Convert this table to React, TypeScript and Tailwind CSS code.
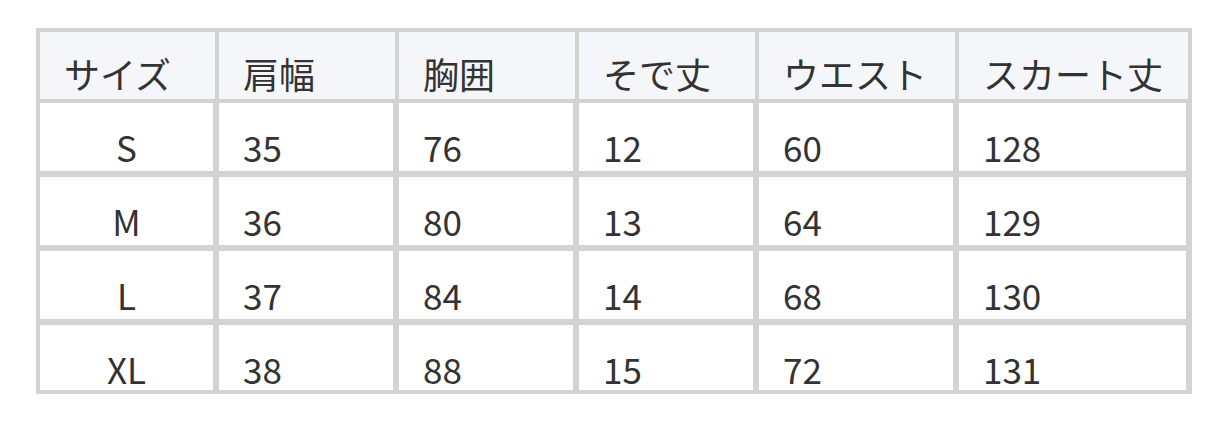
const headers = ['サイズ', '肩幅', '胸囲', 'そで丈', 'ウエスト', 'スカート丈']

const rows = [
  ['S', '35', '76', '12', '60', '128'],
  ['M', '36', '80', '13', '64', '129'],
  ['L', '37', '84', '14', '68', '130'],
  ['XL', '38', '88', '15', '72', '131'],
]

export default function App() {
  return (
    <div className="min-h-screen bg-white pl-[36px] pt-[28px] font-['Noto_Sans_CJK_JP','Noto_Sans',sans-serif] text-[#333]">
      <div className="grid w-fit grid-cols-[175px_176px_176px_176px_196px_229px] gap-1 bg-[#d3d3d3] p-1">
        {headers.map((h) => (
          <div key={h} className="h-[67px] bg-[#f5f6fa] pl-6 pt-[23px] text-[36px] leading-[36px]">
            {h}
          </div>
        ))}
        {rows.map((row, ri) =>
          row.map((cell, ci) => (
            <div
              key={`${ri}-${ci}`}
              className={`border-r-2 border-[#d3d3d3] bg-white pt-[26px] text-[35px] leading-[35px] ${
                ri === rows.length - 1 ? 'h-[65px] border-b-0' : 'h-[70px] border-b-2'
              } ${ci === 0 ? 'text-center' : 'pl-6'}`}
            >
              {cell}
            </div>
          )),
        )}
      </div>
    </div>
  )
}
